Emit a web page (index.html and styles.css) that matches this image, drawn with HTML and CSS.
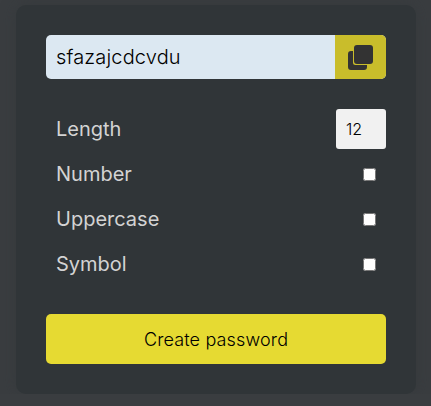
FILE: index.html
```html
<!DOCTYPE html>
<html lang="en">
<head>
<meta charset="utf-8">
<title>Password generator</title>
<link rel="stylesheet" href="styles.css">
</head>
<body>
<main class="card">
  <div class="result">
    <span class="password">sfazajcdcvdu</span>
    <button class="copy" aria-label="Copy">
      <svg viewBox="0 0 25 25" width="25" height="25" fill="currentColor"><rect x="6" y="0" width="19" height="19" rx="3"/><path d="M3 6h2v11.500a2.500 2.500 0 0 0 2.500 2.500H19v2a3 3 0 0 1-3 3H3a3 3 0 0 1-3-3V9a3 3 0 0 1 3-3z"/></svg>
    </button>
  </div>
  <div class="options">
    <div class="row"><label for="length">Length</label><input class="length" id="length" type="text" value="12"></div>
    <div class="row"><label for="number">Number</label><input class="check" id="number" type="checkbox"></div>
    <div class="row"><label for="upper">Uppercase</label><input class="check" id="upper" type="checkbox"></div>
    <div class="row"><label for="symbol">Symbol</label><input class="check" id="symbol" type="checkbox"></div>
  </div>
  <button class="create">Create password</button>
</main>
</body>
</html>
```
FILE: styles.css
```css
* { box-sizing: border-box; }
body {
  margin: 0;
  padding: 5px 15px 0 16px;
  background: #3a3d40;
  font-family: Inter, sans-serif;
  overflow: hidden;
}
.card {
  height: 389px;
  padding: 30px;
  border-radius: 10px;
  background: #303538;
  box-shadow: 0 0 15px rgba(48, 53, 56, 0.5);
}
.result {
  display: flex;
  height: 44px;
  border-radius: 5px;
  overflow: hidden;
  background: #dce8f2;
}
.password {
  flex: 1;
  padding-left: 10px;
  font-size: 20px;
  font-weight: 300;
  letter-spacing: 0.15px;
  line-height: 44px;
  color: #000;
}
.copy {
  display: flex;
  align-items: center;
  justify-content: center;
  width: 51px;
  padding: 0;
  border: 0;
  background: #c9bd2b;
  color: #333;
}
.options {
  display: flex;
  flex-direction: column;
  gap: 5px;
  margin: 30px 0;
}
.row {
  display: flex;
  align-items: center;
  justify-content: space-between;
  height: 40px;
  padding-left: 10px;
  font-size: 20px;
  color: #d3d3d3;
}
.length {
  width: 50px;
  height: 40px;
  padding: 0 10px;
  border: 0;
  border-radius: 3px;
  background: #f1f1f1;
  font: 300 16px Inter, sans-serif;
  color: #000;
}
.check {
  width: 13px;
  height: 13px;
  margin: 0 10px 0 0;
}
.create {
  display: block;
  width: 100%;
  height: 50px;
  border: 0;
  border-radius: 5px;
  background: #e6da32;
  font: 300 18px Inter, sans-serif;
  letter-spacing: 0.15px;
  color: #000;
}
```
